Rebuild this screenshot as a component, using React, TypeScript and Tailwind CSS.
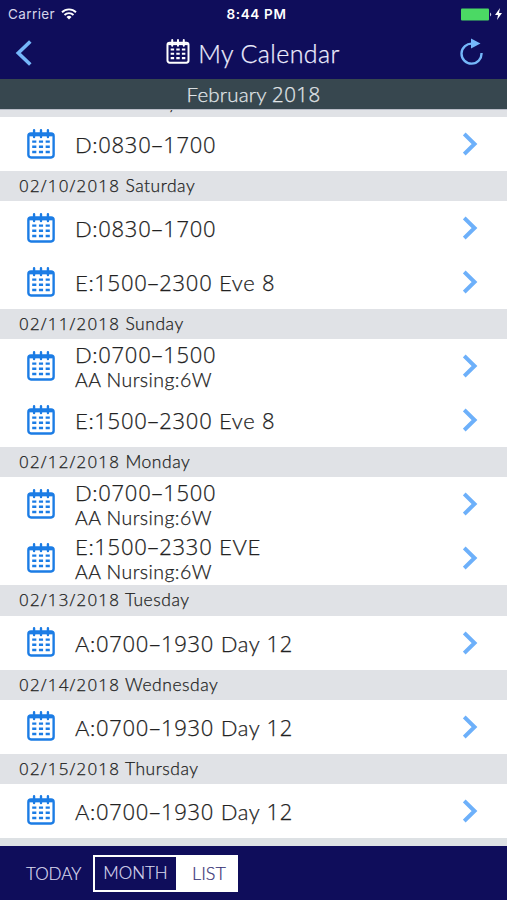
import clsx from "clsx";

type Shift = { title: string; unit?: string };
type Day = { date?: string; shifts: Shift[] };

const days: Day[] = [
  { shifts: [{ title: "D:0830–1700" }] },
  { date: "02/10/2018 Saturday", shifts: [{ title: "D:0830–1700" }, { title: "E:1500–2300 Eve 8" }] },
  { date: "02/11/2018 Sunday", shifts: [{ title: "D:0700–1500", unit: "AA Nursing:6W" }, { title: "E:1500–2300 Eve 8" }] },
  {
    date: "02/12/2018 Monday",
    shifts: [
      { title: "D:0700–1500", unit: "AA Nursing:6W" },
      { title: "E:1500–2330 EVE", unit: "AA Nursing:6W" },
    ],
  },
  { date: "02/13/2018 Tuesday", shifts: [{ title: "A:0700–1930 Day 12" }] },
  { date: "02/14/2018 Wednesday", shifts: [{ title: "A:0700–1930 Day 12" }] },
  { date: "02/15/2018 Thursday", shifts: [{ title: "A:0700–1930 Day 12" }] },
];

// Digits get their own face and tracking next to the thin letters
function Label({ text, digits = "tracking-[0.034em]" }: { text: string; digits?: string }) {
  return (
    <>
      {text.split(/([0-9/–]+)/).map((part, i) =>
        i % 2 ? <span key={i} className={clsx("font-['Open_Sans','Noto_Sans',sans-serif]", digits)}>{part}</span> : part
      )}
    </>
  );
}

function CalendarIcon({ className }: { className: string }) {
  return (
    <svg viewBox="0 0 27 29" className={className} fill="none" stroke="currentColor">
      <rect x="1.3" y="4.3" width="24.4" height="23.2" rx="2.5" strokeWidth="2.3" />
      <path d="M2 6h23" strokeWidth="2.2" />
      <path d="M6.8 1.2v6.6M13.5 1.2v6.6M20.2 1.2v6.6" strokeWidth="2.3" strokeLinecap="round" />
      <path d="M5 12.2h4M11.5 12.2h4M18 12.2h4M5 17.2h4M11.5 17.2h4M18 17.2h4M5 22.2h4M11.5 22.2h4M18 22.2h4" strokeWidth="2.4" />
    </svg>
  );
}

function Row({ shift }: { shift: Shift }) {
  return (
    <div className="flex h-[54px] items-center pr-[29px] pl-[27px]">
      <CalendarIcon className="mb-px h-[30px] w-[28px] shrink-0 text-[#1b7ce5]" />
      <div className="ml-[20px] flex-1 whitespace-nowrap [-webkit-text-stroke:0.25px_#222]">
        <div className="pt-px text-[22px] leading-[25px] tracking-[0.028em] text-[#222]"><Label text={shift.title} /></div>
        {shift.unit && <div className="text-[19.5px] leading-[25px] tracking-[0.022em] text-[#222]">{shift.unit}</div>}
      </div>
      <svg viewBox="0 0 15 24" className="h-6 w-[15px]" fill="none" stroke="#6db0fa" strokeWidth="4">
        <path d="M1.2 2l10.3 10L1.2 22" />
      </svg>
    </div>
  );
}

export default function App() {
  return (
    <div className="flex h-[900px] w-[507px] flex-col overflow-hidden bg-white font-['Lato','Liberation_Sans',sans-serif] font-light">
      <header className="h-[79px] shrink-0 bg-[#0f0d5b] text-white">
        <div className="grid h-7 grid-cols-3 items-center pr-[5px] pl-2 font-['Inter',sans-serif] text-[13.5px]">
          <div className="flex items-center gap-[6px]">
            <span className="font-normal tracking-[0.03em] text-[#d5d5ea]">Carrier</span>
            <svg viewBox="0 0 16 12" className="h-3 w-4" fill="none" stroke="#fff" strokeWidth="1.9">
              <path d="M1 4.2a10 10 0 0 1 14 0M3.5 7a6.4 6.4 0 0 1 9 0" />
              <path d="M8 11.5L5.5 9a3.6 3.6 0 0 1 5 0z" fill="#fff" stroke="none" />
            </svg>
          </div>
          <div className="pl-[3px] text-center font-semibold tracking-[0.05em]">8:44 PM</div>
          <div className="flex items-center justify-end gap-0.5">
            <svg viewBox="0 0 32 13" className="h-[13px] w-[32px]">
              <rect x="0" y="0.5" width="28" height="12" rx="1" fill="#4bd964" />
              <path d="M29 4.5q2.5 2 0 4z" fill="#c9c9df" />
            </svg>
            <svg viewBox="0 0 7 12" className="h-3 w-[7px]" fill="#fff"><path d="M5 0L0 7h3L2 12l5-7H4z" /></svg>
          </div>
        </div>
        <div className="flex h-[50px] items-center justify-between pr-[24px] pl-[15px]">
          <svg viewBox="0 0 17 26" className="h-[26px] w-[17px]" fill="none" stroke="#75b7fa" strokeWidth="3.6">
            <path d="M15.3 1.5L3.3 13l12 11.5" />
          </svg>
          <div className="ml-[14px] flex items-center gap-[8px]">
            <CalendarIcon className="mb-1 h-[25px] w-[24px]" />
            <h1 className="text-[25px] leading-[50px] tracking-[0.015em] whitespace-nowrap text-[#eef] [-webkit-text-stroke:0.25px_#eef]">My Calendar</h1>
          </div>
          <svg viewBox="0 0 23 27" className="mb-1 h-[27px] w-[23px]" fill="none" stroke="#75b7fa" strokeWidth="2.4">
            <path d="M12.5 5.7A10 10 0 1 0 21.5 15" />
            <path d="M11 0.5v10l9.5-5z" fill="#75b7fa" stroke="none" />
          </svg>
        </div>
      </header>
      <div className="h-[30px] shrink-0 bg-[#37474f] text-center text-[20.5px] leading-[30px] tracking-[0.01em] text-[#e1e6e9] [-webkit-text-stroke:0.25px_#e1e6e9]">
        <Label text="February 2018" digits="tracking-[0.02em]" />
      </div>
      <main className="h-[737px] shrink-0 overflow-hidden">
        {/* header of the previous day, scrolled almost out of view */}
        <div className="flex h-2 items-end overflow-hidden border-t border-[#b9bdc8] bg-[#e0e2e6] pl-[19px]">
          <div className="h-[23px] text-[17px] leading-[17px] tracking-[0.055em] text-[#111] [-webkit-text-stroke:0.25px_#222]">
            <Label text="02/09/2018 Friday" digits="tracking-[0.08em]" />
          </div>
        </div>
        {days.map((day, i) => (
          <section key={i}>
            {day.date && (
              <div className="h-[30.17px] bg-[#e0e2e6] pl-[19px] text-[17.5px] leading-[30px] tracking-[0.03em] text-[#222] [-webkit-text-stroke:0.25px_#222]">
                <Label text={day.date} digits="tracking-[0.07em] text-[17px]" />
              </div>
            )}
            {day.shifts.map((s, j) => <Row key={j} shift={s} />)}
          </section>
        ))}
        <div className="h-2 bg-[#dde1e4]" />
      </main>
      <footer className="flex flex-1 items-center bg-[#0f0d5b] pl-[26px] text-[17px] text-[#dddcf0] [-webkit-text-stroke:0.2px_currentColor]">
        <button className="w-[67px] pt-0.5 text-left">TODAY</button>
        <div className="flex h-[37px] w-[145px] border-2 border-white">
          <button className="w-[81px]">MONTH</button>
          <button className="flex-1 bg-white pl-1.5 text-[18px] text-[#383577]">LIST</button>
        </div>
      </footer>
    </div>
  );
}
